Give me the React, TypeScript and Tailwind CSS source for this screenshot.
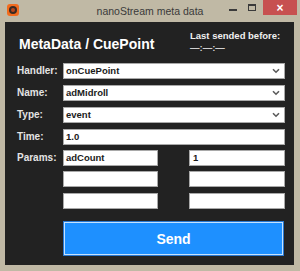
import React from "react";

const Chevron = () => (
  <svg width="8" height="6" viewBox="0 0 8 6" className="shrink-0">
    <path d="M1 1.2 L4 4.2 L7 1.2" fill="none" stroke="#5a5a5a" strokeWidth="1.6" />
  </svg>
);

function Select({ value }: { value: string }) {
  return (
    <div className="flex-1 h-[16px] bg-white border border-[#a9a9a9] flex items-center justify-between pl-[2px] pr-[4px]">
      <span className="text-[9.5px] font-bold text-[#1a1a1a] leading-none">{value}</span>
      <Chevron />
    </div>
  );
}

function Input({ value, className = "" }: { value?: string; className?: string }) {
  return (
    <div className={`h-[16px] bg-white border border-[#a9a9a9] flex items-center pl-[2px] ${className}`}>
      <span className="text-[9.5px] font-bold text-[#1a1a1a] leading-none">{value}</span>
    </div>
  );
}

function Label({ text }: { text: string }) {
  return (
    <div className="w-[46px] shrink-0 text-[10px] font-bold text-[#e4e4e4] leading-none">{text}</div>
  );
}

export default function App() {
  return (
    <div
      className="w-[300px] h-[271px] bg-[#c0b9a5] flex flex-col overflow-hidden"
      style={{ fontFamily: '"Liberation Sans", Arial, sans-serif' }}
    >
      {/* Title bar */}
      <div className="h-[22px] shrink-0 grid grid-cols-[1fr_auto_1fr] items-start">
        <div className="pl-[7px] pt-[4px]">
          <div className="w-[12px] h-[12px] rounded-[3px] bg-[#f26b1d] flex items-center justify-center">
            <div className="w-[8px] h-[8px] rounded-full bg-[#3a2a22] flex items-center justify-center">
              <div className="w-[4px] h-[4px] rounded-full bg-[#b8471c]" />
            </div>
          </div>
        </div>
        <div className="pt-[5px] text-[10.5px] leading-[13px] text-[#3a3a3a]">nanoStream meta data</div>
        <div className="flex justify-end items-start pr-[3px]">
          <div className="w-[8px] h-[2px] bg-[#3a3a3a] mt-[9px]" />
          <div className="ml-[11px] mt-[4px] w-[8px] h-[7px] border border-[#3a3a3a] border-t-2" />
          <div className="ml-[7px] w-[34px] h-[15px] bg-[#c75050] flex items-center justify-center text-white text-[12px] font-bold leading-none">
            ×
          </div>
        </div>
      </div>

      {/* Body */}
      <div className="ml-[5px] mr-[6px] h-[243px] bg-[#222222] pl-[12px] pr-[9px] pt-[8px] flex flex-col">
        <div className="flex items-start">
          <div className="ml-[2px] mt-[6px] text-[14px] font-bold leading-[16px] text-white w-[171px]">
            MetaData / CuePoint
          </div>
          <div className="text-[9.5px] font-bold leading-[11px] text-[#f0f0f0]">
            <div>Last sended before:</div>
            <div className="mt-[1px] text-[#d0d0d0]">—:—:—</div>
          </div>
        </div>

        <div className="mt-[10px] flex items-center">
          <Label text="Handler:" />
          <Select value="onCuePoint" />
        </div>
        <div className="mt-[6px] flex items-center">
          <Label text="Name:" />
          <Select value="adMidroll" />
        </div>
        <div className="mt-[6px] flex items-center">
          <Label text="Type:" />
          <Select value="event" />
        </div>
        <div className="mt-[6px] flex items-center">
          <Label text="Time:" />
          <Input value="1.0" className="flex-1" />
        </div>
        <div className="mt-[5px] flex items-center">
          <Label text="Params:" />
          <Input value="adCount" className="w-[95px]" />
          <Input value="1" className="flex-1 ml-[31px] pl-[3px]" />
        </div>
        <div className="mt-[5px] flex items-center">
          <Label text="" />
          <Input className="w-[95px]" />
          <Input className="flex-1 ml-[31px]" />
        </div>
        <div className="mt-[6px] flex items-center">
          <Label text="" />
          <Input className="w-[95px]" />
          <Input className="flex-1 ml-[31px]" />
        </div>

        <div className="mt-[12px] flex">
          <div className="w-[46px] shrink-0" />
          <button className="flex-1 h-[35px] mr-[1px] bg-[#1e90ff] border border-[#2a78d0] shadow-[inset_0_0_0_1px_#c4e2ff] text-white text-[14px] font-bold leading-none flex items-center justify-center">
            Send
          </button>
        </div>
      </div>
    </div>
  );
}
